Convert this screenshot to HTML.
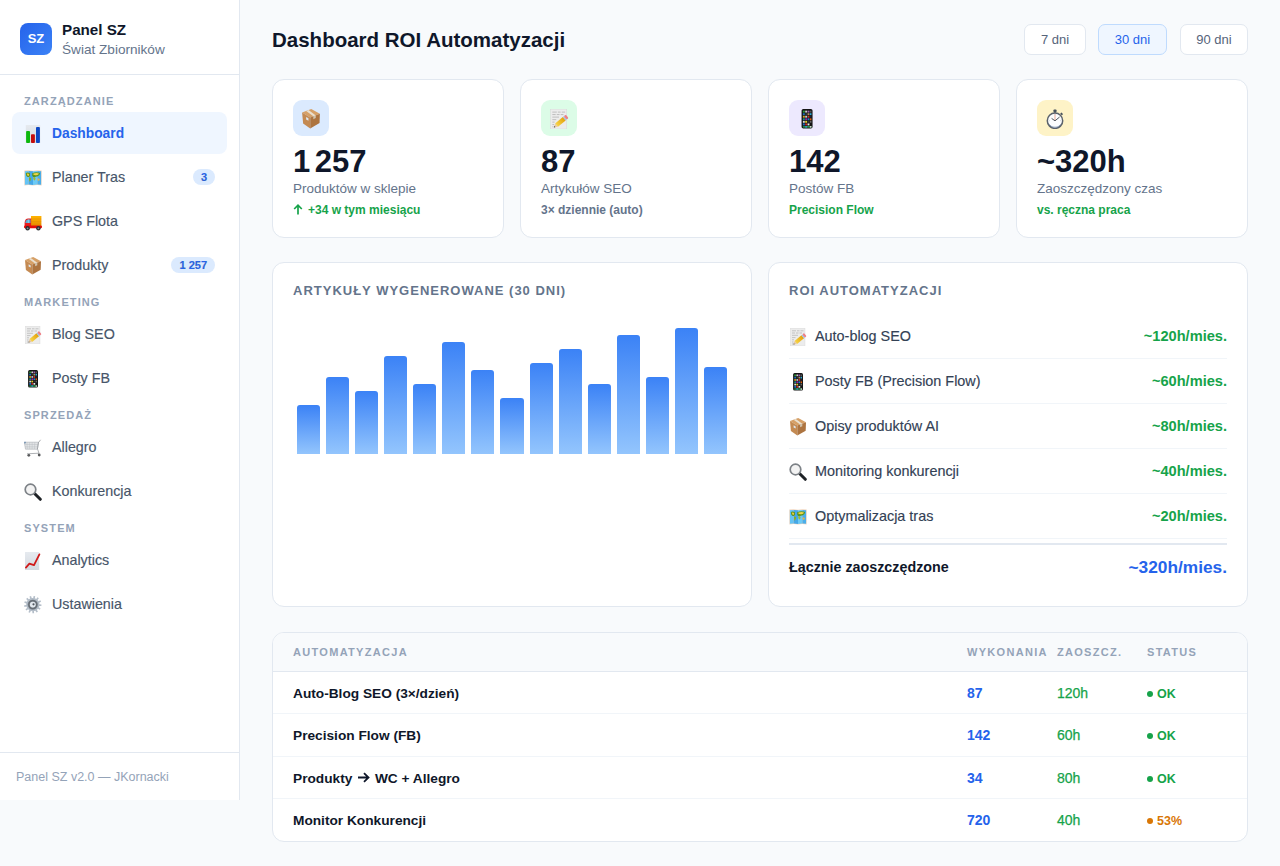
<!DOCTYPE html>
<html lang="pl">
<head>
<meta charset="utf-8">
<title>Panel SZ</title>
<style>
*{box-sizing:border-box;margin:0;padding:0}
html,body{width:1280px;height:866px;overflow:hidden}
body{font-family:"Liberation Sans",sans-serif;background:#f8fafc;color:#0f172a;position:relative}
.sb{position:absolute;left:0;top:0;width:240px;height:800px;background:#fff;border-right:1px solid #e2e8f0}
.sb-head{position:absolute;left:0;top:0;width:239px;height:75px;border-bottom:1px solid #e2e8f0}
.logo{position:absolute;left:20px;top:23px;width:32px;height:32px;border-radius:8px;background:linear-gradient(135deg,#2563eb,#3b82f6);color:#fff;font-weight:700;font-size:13px;line-height:32px;text-align:center}
.brand{position:absolute;left:62px;top:20px;font-size:15.2px;font-weight:700;color:#0f172a;line-height:19px}
.brand-sub{position:absolute;left:62px;top:42px;font-size:13.6px;color:#64748b;line-height:16px}
.nav{position:absolute;left:12px;top:87px;width:215px}
.sec{height:25px;padding:8px 12px 0;font-size:11px;font-weight:700;letter-spacing:1.1px;color:#94a3b8;line-height:13px}
.it{position:relative;height:42px;margin-bottom:2px;border-radius:8px;font-size:14.3px;color:#475569;-webkit-text-stroke:0.15px #475569;line-height:43px;padding-left:40px}
.it.act{background:#eff6ff;color:#2563eb;font-weight:700;font-size:13.8px;-webkit-text-stroke:0}
.it .ic{position:absolute;left:12px;top:13px;width:18px;height:18px;overflow:visible}
.badge{position:absolute;right:12px;top:13px;height:16px;padding:0 8px;border-radius:8px;background:#dbeafe;color:#2563eb;font-size:11px;font-weight:700;line-height:16px}
.sb-foot{position:absolute;left:0;top:752px;width:239px;height:48px;border-top:1px solid #e2e8f0;font-size:12.5px;color:#94a3b8;padding-left:16px;line-height:49px}

.title{position:absolute;left:272px;top:26px;font-size:20.5px;font-weight:700;line-height:28px;color:#0f172a}
.btn{position:absolute;top:24px;height:31px;border:1px solid #e2e8f0;background:#fff;border-radius:7px;font-size:13px;color:#56647a;line-height:29px;text-align:center}
.btn.act{background:#eff6ff;border-color:#bfdbfe;color:#2563eb}

.card{position:absolute;background:#fff;border:1px solid #e2e8f0;border-radius:12px}
.stat{top:79px;width:232px;height:159px}
.sic{position:absolute;left:20px;top:20px;width:36px;height:36px;border-radius:9px}
.sic svg{position:absolute;left:8px;top:9px;width:20px;height:20px;overflow:visible}
.num{position:absolute;left:20px;top:64px;font-size:31px;font-weight:700;line-height:36px;color:#0f172a}
.lbl{position:absolute;left:20px;top:100px;font-size:13.5px;color:#64748b;line-height:17px}
.sub{position:absolute;left:20px;top:123px;font-size:12px;font-weight:700;color:#16a34a;line-height:15px}

.ctitle{position:absolute;left:20px;top:20px;font-size:13px;font-weight:700;letter-spacing:1px;color:#64748b;line-height:16px}
.bars{position:absolute;left:24px;top:40px;width:430px;height:151px;display:flex;align-items:flex-end;gap:6px}
.bar{flex:1;border-radius:3px 3px 0 0;background:linear-gradient(180deg,#3b82f6,#93c5fd)}

.roi{position:absolute;left:20px;top:51px;width:438px}
.row{position:relative;height:45px;border-bottom:1px solid #f1f5f9;font-size:14.4px;color:#334155;-webkit-text-stroke:0.15px #334155;line-height:45px;padding-left:26px}
.row .ic{position:absolute;left:0;top:13.5px;width:18px;height:18px;overflow:visible}
.row .v{position:absolute;right:0;top:0;color:#16a34a;font-weight:700;font-size:14.6px;-webkit-text-stroke:0}
.total{position:absolute;left:20px;top:280px;width:438px;height:48px;border-top:2px solid #e2e8f0;font-size:14.3px;font-weight:700;line-height:44px;color:#0f172a}
.total .v{position:absolute;right:0;top:0;color:#2563eb;font-size:17.3px}

.tbl{left:272px;top:632px;width:976px;height:210px;overflow:hidden}
.th{position:absolute;left:0;top:0;width:100%;height:39px;background:#f8fafc;border-bottom:1px solid #e2e8f0}
.th span{position:absolute;top:0;font-size:11px;font-weight:700;letter-spacing:1.3px;color:#94a3b8;line-height:39px}
.tr{position:absolute;left:0;width:100%;height:42px;border-bottom:1px solid #f1f5f9}
.tr span{position:absolute;top:1px;line-height:41px;font-size:14px}
.c1{left:20px;font-weight:700;color:#0f172a}
.tr .c1{font-size:13.7px}
.c2{left:694px;font-weight:700;color:#2563eb}
.c3{left:784px;color:#16a34a;-webkit-text-stroke:0.25px #16a34a}
.c4{left:874px;top:2px!important;font-size:12.5px!important;font-weight:700;color:#16a34a}
.dot{display:inline-block;width:6px;height:6px;border-radius:3px;background:#16a34a;margin-right:4px;vertical-align:1px}
</style>
</head>
<body>
<svg width="0" height="0" style="position:absolute">
<defs>
<linearGradient id="gpap" x1="0" y1="0" x2="0" y2="1"><stop offset="0" stop-color="#e6eaef"/><stop offset="1" stop-color="#d3d9e0"/></linearGradient>
<linearGradient id="gtrk" x1="0" y1="0" x2="0" y2="1"><stop offset="0" stop-color="#ffb300"/><stop offset="1" stop-color="#e88a00"/></linearGradient>
<linearGradient id="gpen" x1="0" y1="0" x2="1" y2="0"><stop offset="0" stop-color="#f7d54a"/><stop offset="1" stop-color="#e3a20c"/></linearGradient>
</defs>
<symbol id="i-chart" viewBox="0 0 18 18">
 <rect x="1.8" y="0" width="14.4" height="18" fill="url(#gpap)"/>
 <rect x="2.1" y="6" width="3.9" height="12" rx="0.9" fill="#0db80d"/>
 <rect x="7" y="9.2" width="3.9" height="8.8" rx="0.9" fill="#c50d0d"/>
 <rect x="12" y="2" width="3.9" height="16" rx="0.9" fill="#0c47c4"/>
</symbol>
<symbol id="i-map" viewBox="0 0 18 18">
 <path d="M0.3 1.6 L4.6 1.2 L9 1.7 L13.4 1.2 L17.7 1.6 L17.6 16.4 L13.4 16 L9 16.5 L4.6 16 L0.4 16.4 Z" fill="#f0d4bc"/>
 <path d="M0.9 2.2 L4.6 1.9 L4.6 15.4 L0.9 15.8 Z" fill="#63c4f5"/>
 <path d="M4.6 1.9 L9 2.3 L9 15.9 L4.6 15.4 Z" fill="#45a8e8"/>
 <path d="M9 2.3 L13.4 1.9 L13.4 15.4 L9 15.9 Z" fill="#6ccaf6"/>
 <path d="M13.4 1.9 L17.1 2.2 L17.1 15.8 L13.4 15.4 Z" fill="#4aaeea"/>
 <path d="M1.8 4 Q4.2 3 6 4.4 Q6.4 6.8 4.8 8 Q3 8.2 2.2 6.4 Z" fill="#5c8e1e"/>
 <path d="M2.6 4.6 Q4 4 5.2 5 Q5.2 6.6 4.3 7.2 Q3.2 6.8 2.6 4.6Z" fill="#e6cf3a"/>
 <path d="M5 8.6 Q7 8.4 7.2 9.8 Q6.8 12 5.6 12.8 Q4.8 11 5 8.6Z" fill="#86ac2c"/>
 <path d="M8.2 4.2 Q12 2.6 16.2 4 Q16 6.8 13.4 7.4 Q11.4 7.2 10.8 8.6 Q9 8.8 8.2 6.8 Z" fill="#5a9420"/>
 <path d="M9.4 4.6 Q12.4 3.6 15 4.4 Q14.4 6.2 12.4 6.2 Q10.6 6.4 9.4 5.8Z" fill="#eed548"/>
 <path d="M9.2 8.4 Q11.2 8 11.6 9.6 Q11.2 11.4 10.2 11.6 Q9 10.2 9.2 8.4Z" fill="#9ab83a"/>
 <path d="M13.4 9.6 Q15.6 9.2 15.9 10.8 Q15.2 12 13.8 11.6Z" fill="#e2b84c"/>
</symbol>
<symbol id="i-truck" viewBox="0 0 18 18">
 <rect x="7" y="3" width="10.4" height="10.6" fill="url(#gtrk)"/>
 <path d="M7.2 6 H17.2 M7.2 8.6 H17.2 M7.2 11.2 H17.2" stroke="#d98400" stroke-width="0.35"/>
 <path d="M0.6 14.4 V10 Q0.9 5.6 4.2 5.6 H7.1 V14.4 Z" fill="#ea1c1c"/>
 <path d="M1.3 9.9 Q1.6 6.4 4.2 6.4 H6.5 V9.9 Z" fill="#5ab0d6"/>
 <rect x="3.9" y="6.4" width="0.5" height="3.5" fill="#d8eef6"/>
 <rect x="0" y="12.4" width="18" height="2.8" rx="1.3" fill="#e30b0b"/>
 <circle cx="3.6" cy="15.3" r="2.2" fill="#2b2f33"/><circle cx="3.6" cy="15.3" r="0.9" fill="#8a9096"/>
 <circle cx="14.4" cy="15.3" r="2.2" fill="#2b2f33"/><circle cx="14.4" cy="15.3" r="0.9" fill="#8a9096"/>
</symbol>
<symbol id="i-box" viewBox="0 0 18 18">
 <path d="M1 3.1 L9.2 0.1 L17 4.3 L8.3 7.6 Z" fill="#d6a067"/>
 <path d="M1 3.1 L8.3 7.6 L8.3 17.6 L1.9 13 Z" fill="#c48a52"/>
 <path d="M8.3 7.6 L17 4.3 L16.7 12.7 L8.3 17.6 Z" fill="#ad7440"/>
 <path d="M4.6 1.8 L6.8 1 L13.3 5.8 L11.1 6.6 Z" fill="#e9dfcf"/>
 <path d="M11.1 6.6 L13.3 5.8 L13.3 8.2 L11.1 9.2 Z" fill="#cfc3ae"/>
 <path d="M4.6 7.2 L6.7 8.4 L6.7 10.6 L4.6 9.4 Z" fill="#dde6ee"/>
</symbol>
<symbol id="i-memo" viewBox="0 0 18 18">
 <rect x="1.4" y="0.1" width="14.6" height="17.9" fill="#ececec" stroke="#d4d4d4" stroke-width="0.4"/>
 <path d="M3 2.8 H7 M8 2.8 H10.5 M11.5 2.8 H14.5 M3 5 H6 M7 5 H9.5 M10.5 5 H13 M3 7.3 H9 M3 9.6 H6.5 M3 11.8 H5 M3 14 H4.6 M3 16 H4" stroke="#a8a8a8" stroke-width="0.6"/>
 <g transform="translate(10.8 11.2) rotate(-40)">
  <rect x="-5.2" y="-2" width="9" height="4" fill="url(#gpen)"/>
  <rect x="3.8" y="-2" width="1.2" height="4" fill="#9cc0e0"/>
  <rect x="5" y="-2" width="2.2" height="4" rx="0.9" fill="#ee7f86"/>
  <path d="M-5.2 -2 L-8.2 0 L-5.2 2 Z" fill="#e8c8a0"/>
  <path d="M-7.2 -0.7 L-8.4 0 L-7.2 0.7 Z" fill="#333"/>
 </g>
</symbol>
<symbol id="i-phone" viewBox="0 0 18 18">
 <rect x="4.1" y="0.1" width="9.9" height="17.4" rx="1.5" fill="#151515"/>
 <g>
 <rect x="5.3" y="1.5" width="1.7" height="1.7" fill="#2e9d3a"/><rect x="7.4" y="1.5" width="1.7" height="1.7" fill="#cfcfcf"/><rect x="9.5" y="1.5" width="1.7" height="1.7" fill="#9a5bb0"/><rect x="11.6" y="1.5" width="1.4" height="1.7" fill="#555"/>
 <rect x="5.3" y="3.8" width="1.7" height="1.7" fill="#1a6fc0"/><rect x="7.4" y="3.8" width="1.7" height="1.7" fill="#333"/><rect x="9.5" y="3.8" width="1.7" height="1.7" fill="#b09060"/><rect x="11.6" y="3.8" width="1.4" height="1.7" fill="#2aa8d8"/>
 <rect x="5.3" y="6.1" width="1.7" height="1.7" fill="#d8a020"/><rect x="7.4" y="6.1" width="1.7" height="1.7" fill="#b8d0d0"/><rect x="9.5" y="6.1" width="1.7" height="1.7" fill="#c83030"/><rect x="11.6" y="6.1" width="1.4" height="1.7" fill="#223"/>
 <rect x="5.3" y="8.4" width="1.7" height="1.7" fill="#16908a"/><rect x="7.4" y="8.4" width="1.7" height="1.7" fill="#a020a0"/><rect x="9.5" y="8.4" width="1.7" height="1.7" fill="#1a80d0"/><rect x="11.6" y="8.4" width="1.4" height="1.7" fill="#e06010"/>
 <rect x="5.3" y="10.7" width="1.7" height="1.7" fill="#d8d8d8"/><rect x="7.4" y="10.7" width="1.7" height="1.7" fill="#e0d020"/><rect x="9.5" y="10.7" width="1.7" height="1.7" fill="#333"/><rect x="11.6" y="10.7" width="1.4" height="1.7" fill="#666"/>
 <rect x="5.3" y="13" width="1.7" height="1.7" fill="#1a70c8"/><rect x="7.4" y="13" width="1.7" height="1.7" fill="#c02828"/><rect x="9.5" y="13" width="1.7" height="1.7" fill="#e8e8e8"/>
 <rect x="5.3" y="15.4" width="7.7" height="1.3" fill="#2a9a48"/><rect x="7.4" y="15.4" width="1.7" height="1.3" fill="#2a90d0"/><rect x="11.6" y="15.4" width="1.4" height="1.3" fill="#ddd"/>
 </g>
</symbol>
<symbol id="i-cart" viewBox="0 0 18 18">
 <path d="M0.3 3.2 L14.5 3.2 L13.4 10.2 L1.5 10.2 Z" fill="#e2e4e6" stroke="#a9adb1" stroke-width="0.6"/>
 <path d="M3 3.3 L3.3 10 M5.6 3.3 L5.7 10 M8.2 3.3 L8.1 10 M10.8 3.3 L10.5 10 M0.8 5.5 H14.1 M1.1 7.8 H13.8" stroke="#b8bcc0" stroke-width="0.45"/>
 <path d="M14.6 3.4 L16.6 0.8 M13.6 10.2 L15 14.2 L3 14.8 M14.5 3.2 L13.4 10.2" stroke="#9a9ea2" stroke-width="0.8" fill="none"/>
 <rect x="0.2" y="2.8" width="1.6" height="1.6" fill="#6f8fb0"/>
 <circle cx="4.8" cy="16.3" r="1.4" fill="#58595b"/><circle cx="15.2" cy="16" r="1.4" fill="#58595b"/>
</symbol>
<symbol id="i-search" viewBox="0 0 18 18">
 <line x1="10.8" y1="10.8" x2="16.3" y2="16.3" stroke="#1e2226" stroke-width="3" stroke-linecap="round"/>
 <circle cx="6.5" cy="6.5" r="5.3" fill="#f3f3f3" stroke="#7d8287" stroke-width="1.7"/>
</symbol>
<symbol id="i-trend" viewBox="0 0 18 18">
 <rect x="1" y="0" width="14.2" height="18" fill="url(#gpap)"/>
 <polyline points="1.9,15.6 5.4,11.6 10,13.1 15.4,2.4" fill="none" stroke="#d01a1a" stroke-width="1.8" stroke-linejoin="round" stroke-linecap="round"/>
</symbol>
<symbol id="i-gear" viewBox="0 0 18 18">
 <path d="M8.80 2.00 L9.18 2.01 L9.64 -0.06 L11.21 0.24 L10.87 2.33 L11.87 2.76 L12.20 2.94 L13.57 1.32 L14.82 2.32 L13.55 4.01 L14.23 4.85 L14.44 5.17 L16.40 4.37 L17.05 5.83 L15.13 6.74 L15.35 7.80 L15.39 8.19 L17.50 8.39 L17.39 9.98 L15.27 9.90 L14.97 10.94 L14.83 11.29 L16.60 12.46 L15.76 13.82 L13.93 12.76 L13.18 13.54 L12.88 13.79 L13.91 15.64 L12.54 16.45 L11.41 14.66 L10.38 15.01 L10.01 15.09 L10.06 17.21 L8.46 17.29 L8.29 15.18 L7.22 15.01 L6.85 14.91 L5.91 16.81 L4.46 16.14 L5.29 14.19 L4.42 13.54 L4.14 13.28 L2.43 14.52 L1.45 13.26 L3.09 11.92 L2.63 10.94 L2.50 10.58 L0.41 10.89 L0.13 9.31 L2.21 8.89 L2.25 7.80 L2.31 7.43 L0.30 6.72 L0.79 5.20 L2.83 5.79 L3.37 4.85 L3.59 4.54 L2.15 2.99 L3.29 1.87 L4.82 3.34 L5.73 2.76 L6.08 2.59 L5.52 0.54 L7.05 0.08 L7.72 2.09Z" fill="#b4bec9"/>
 <circle cx="8.8" cy="8.6" r="5.2" fill="#8a939c"/>
 <circle cx="8.8" cy="8.6" r="3.9" fill="none" stroke="#656c74" stroke-width="1.5"/>
 <circle cx="8.8" cy="8.6" r="2.9" fill="#e3e9ef"/>
 <circle cx="9.5" cy="8.3" r="1.1" fill="#4f565e"/>
</symbol>
<symbol id="i-watch" viewBox="0 0 20 20">
 <rect x="8.5" y="0.6" width="3" height="2.8" rx="0.7" fill="#46505a"/>
 <rect x="9.3" y="2.8" width="1.4" height="1.6" fill="#5a646e"/>
 <rect x="15.4" y="4" width="2.4" height="1.8" rx="0.5" transform="rotate(42 16.6 4.9)" fill="#46505a"/>
 <circle cx="10" cy="11.7" r="7.7" fill="#fbfcfd" stroke="#5b626b" stroke-width="1.5"/>
 <path d="M4.4 15.6 A7 7 0 0 0 15.6 15.6" fill="none" stroke="#7a90b0" stroke-width="0.8"/>
 <line x1="10" y1="5" x2="10" y2="11.8" stroke="#eeb2a2" stroke-width="1.1"/>
 <path d="M6.6 9.4 L10 11.8 L14.6 8" fill="none" stroke="#4d545c" stroke-width="1"/>
 <path d="M10 5.3V6.2M16.1 11.7H15.2M10 17.8V17M3.9 11.7H4.8" stroke="#b8bec6" stroke-width="0.6"/>
</symbol>
</svg>
<div class="sb">
  <div class="sb-head">
    <div class="logo">SZ</div>
    <div class="brand">Panel SZ</div>
    <div class="brand-sub">Świat Zbiorników</div>
  </div>
  <div class="nav">
    <div class="sec">ZARZĄDZANIE</div>
    <div class="it act"><svg class="ic"><use href="#i-chart"/></svg>Dashboard</div>
    <div class="it"><svg class="ic"><use href="#i-map"/></svg>Planer Tras<span class="badge">3</span></div>
    <div class="it"><svg class="ic"><use href="#i-truck"/></svg>GPS Flota</div>
    <div class="it"><svg class="ic"><use href="#i-box"/></svg>Produkty<span class="badge">1 257</span></div>
    <div class="sec">MARKETING</div>
    <div class="it"><svg class="ic"><use href="#i-memo"/></svg>Blog SEO</div>
    <div class="it"><svg class="ic"><use href="#i-phone"/></svg>Posty FB</div>
    <div class="sec">SPRZEDAŻ</div>
    <div class="it"><svg class="ic"><use href="#i-cart"/></svg>Allegro</div>
    <div class="it"><svg class="ic"><use href="#i-search"/></svg>Konkurencja</div>
    <div class="sec">SYSTEM</div>
    <div class="it"><svg class="ic"><use href="#i-trend"/></svg>Analytics</div>
    <div class="it"><svg class="ic"><use href="#i-gear"/></svg>Ustawienia</div>
  </div>
  <div class="sb-foot">Panel SZ v2.0 — JKornacki</div>
</div>

<div class="title">Dashboard ROI Automatyzacji</div>
<div class="btn" style="left:1024px;width:62px">7 dni</div>
<div class="btn act" style="left:1098px;width:69px">30 dni</div>
<div class="btn" style="left:1180px;width:68px">90 dni</div>

<div class="card stat" style="left:272px">
  <div class="sic" style="background:#dbeafe"><svg><use href="#i-box"/></svg></div>
  <div class="num" style="word-spacing:-4px">1 257</div>
  <div class="lbl">Produktów w sklepie</div>
  <div class="sub"><svg width="10" height="11" style="vertical-align:-1px;margin-right:5px" viewBox="0 0 10 11"><path d="M5 10.5V1.2M1.2 5L5 1.2L8.8 5" fill="none" stroke="#16a34a" stroke-width="1.7"/></svg>+34 w tym miesiącu</div>
</div>
<div class="card stat" style="left:520px">
  <div class="sic" style="background:#dcfce7"><svg><use href="#i-memo"/></svg></div>
  <div class="num">87</div>
  <div class="lbl">Artykułów SEO</div>
  <div class="sub" style="color:#64748b">3× dziennie (auto)</div>
</div>
<div class="card stat" style="left:768px">
  <div class="sic" style="background:#ede9fe"><svg><use href="#i-phone"/></svg></div>
  <div class="num">142</div>
  <div class="lbl">Postów FB</div>
  <div class="sub">Precision Flow</div>
</div>
<div class="card stat" style="left:1016px">
  <div class="sic" style="background:#fef3c7"><svg><use href="#i-watch"/></svg></div>
  <div class="num">~320h</div>
  <div class="lbl">Zaoszczędzony czas</div>
  <div class="sub">vs. ręczna praca</div>
</div>

<div class="card" style="left:272px;top:262px;width:480px;height:345px">
  <div class="ctitle">ARTYKUŁY WYGENEROWANE (30 DNI)</div>
  <div class="bars">
    <div class="bar" style="height:49px"></div>
    <div class="bar" style="height:77px"></div>
    <div class="bar" style="height:63px"></div>
    <div class="bar" style="height:98px"></div>
    <div class="bar" style="height:70px"></div>
    <div class="bar" style="height:112px"></div>
    <div class="bar" style="height:84px"></div>
    <div class="bar" style="height:56px"></div>
    <div class="bar" style="height:91px"></div>
    <div class="bar" style="height:105px"></div>
    <div class="bar" style="height:70px"></div>
    <div class="bar" style="height:119px"></div>
    <div class="bar" style="height:77px"></div>
    <div class="bar" style="height:126px"></div>
    <div class="bar" style="height:87px"></div>
  </div>
</div>

<div class="card" style="left:768px;top:262px;width:480px;height:345px">
  <div class="ctitle">ROI AUTOMATYZACJI</div>
  <div class="roi">
    <div class="row"><svg class="ic"><use href="#i-memo"/></svg>Auto-blog SEO<span class="v">~120h/mies.</span></div>
    <div class="row"><svg class="ic"><use href="#i-phone"/></svg>Posty FB (Precision Flow)<span class="v">~60h/mies.</span></div>
    <div class="row"><svg class="ic"><use href="#i-box"/></svg>Opisy produktów AI<span class="v">~80h/mies.</span></div>
    <div class="row"><svg class="ic"><use href="#i-search"/></svg>Monitoring konkurencji<span class="v">~40h/mies.</span></div>
    <div class="row"><svg class="ic"><use href="#i-map"/></svg>Optymalizacja tras<span class="v">~20h/mies.</span></div>
  </div>
  <div class="total">Łącznie zaoszczędzone<span class="v">~320h/mies.</span></div>
</div>

<div class="card tbl">
  <div class="th"><span style="left:20px">AUTOMATYZACJA</span><span style="left:694px">WYKONANIA</span><span style="left:784px">ZAOSZCZ.</span><span style="left:874px">STATUS</span></div>
  <div class="tr" style="top:39px"><span class="c1">Auto-Blog SEO (3×/dzień)</span><span class="c2">87</span><span class="c3">120h</span><span class="c4"><i class="dot"></i>OK</span></div>
  <div class="tr" style="top:81px;height:43px"><span class="c1">Precision Flow (FB)</span><span class="c2">142</span><span class="c3">60h</span><span class="c4"><i class="dot"></i>OK</span></div>
  <div class="tr" style="top:124px"><span class="c1">Produkty <svg width="13" height="11" viewBox="0 0 13 11" style="vertical-align:0px;margin:0 1px"><path d="M1 5.5H11.5M7 1.2L11.5 5.5L7 9.8" fill="none" stroke="#0f172a" stroke-width="1.8"/></svg> WC + Allegro</span><span class="c2">34</span><span class="c3">80h</span><span class="c4"><i class="dot"></i>OK</span></div>
  <div class="tr" style="top:166px;border-bottom:0"><span class="c1">Monitor Konkurencji</span><span class="c2">720</span><span class="c3">40h</span><span class="c4" style="color:#d97706"><i class="dot" style="background:#d97706"></i>53%</span></div>
</div>
</body>
</html>
